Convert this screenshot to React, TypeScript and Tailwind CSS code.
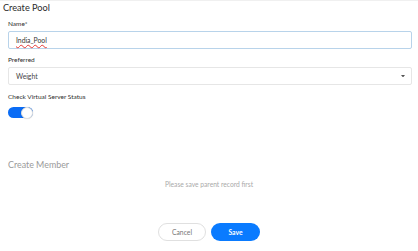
import React from 'react';

export default function App() {
  return (
    <div className="w-[418px] h-[251px] bg-white border-t border-[#f0f0f0] font-['Lato',sans-serif] text-[#333] overflow-hidden">
      <h1 className="pl-[3px] pt-[1px] text-[9.2px] leading-[12px] text-[#2b2b2b]">Create Pool</h1>

      <div className="pl-[8px] pr-[6px]">
        {/* Name */}
        <label className="block mt-[6px] text-[6.5px] leading-[8px] text-[#2e2e2e]">Name*</label>
        <div className="mt-[3px] h-[18px] border border-[#b8d3ea] rounded-[2px] flex items-center px-[7px]">
          <span className="text-[6.8px] text-[#333] underline decoration-wavy decoration-[#e53935] decoration-[0.5px] underline-offset-1">
            India_Pool
          </span>
        </div>

        {/* Preferred */}
        <label className="block mt-[7px] text-[6.5px] leading-[8px] text-[#2e2e2e]">Preferred</label>
        <div className="mt-[3px] h-[18px] border border-[#e6e6e6] rounded-[2px] flex items-center justify-between pl-[7px] pr-[6px]">
          <span className="text-[6.8px] text-[#444]">Weight</span>
          <svg width="4" height="2.5" viewBox="0 0 4 2.5">
            <path d="M0 0 H4 L2 2.5 Z" fill="#555" />
          </svg>
        </div>

        {/* Toggle */}
        <label className="block mt-[8px] text-[6.5px] leading-[8px] text-[#2e2e2e]">Check Virtual Server Status</label>
        <div className="mt-[6px] w-[25px] h-[11px] rounded-full bg-[#0a6cf5] relative">
          <div className="absolute right-0 top-[-0.5px] w-[12px] h-[12px] rounded-full bg-white border border-[#e2e2e2] shadow-[0_0_1px_rgba(0,0,0,0.25)]" />
        </div>
      </div>

      {/* Create Member */}
      <h2 className="pl-[8px] mt-[41px] text-[8.9px] leading-[11px] text-[#9a9a9a]">Create Member</h2>
      <p className="mt-[10px] text-center text-[6.7px] leading-[8px] text-[#aaa]">Please save parent record first</p>

      <div className="mt-[35px] flex justify-center gap-[5px]">
        <button className="w-[48px] h-[18px] rounded-full border border-[#e0e0e0] bg-white text-[6.8px] text-[#777]">
          Cancel
        </button>
        <button className="w-[49px] h-[18px] rounded-full bg-[#0a7bff] text-[6.8px] font-bold text-white">
          Save
        </button>
      </div>
    </div>
  );
}
